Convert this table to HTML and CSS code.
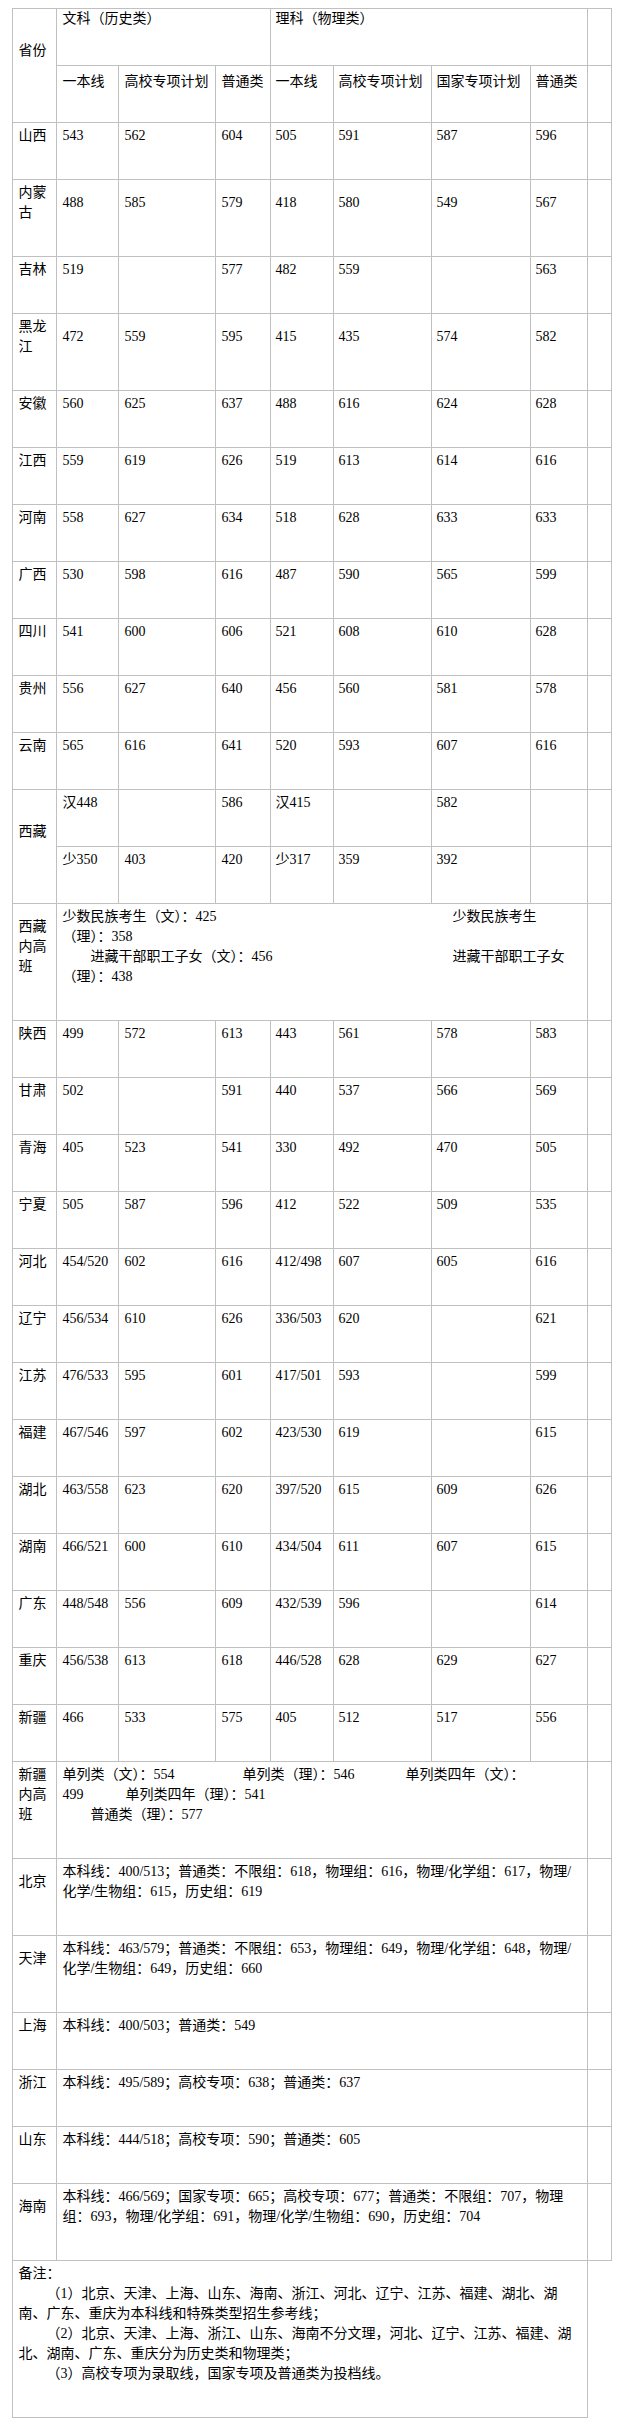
FILE: index.html
```html
<!DOCTYPE html>
<html lang="zh-CN">
<head>
<meta charset="utf-8">
<title>各省录取分数线</title>
<link rel="stylesheet" href="styles.css">
</head>
<body>
<table class="score">
<colgroup>
<col class="w-prov"><col class="w-a1"><col class="w-a2"><col class="w-a3"><col class="w-b1"><col class="w-b2"><col class="w-b3"><col class="w-b4"><col class="w-end">
</colgroup>
<tbody>
<tr>
<td rowspan="2">省份</td>
<td colspan="3" class="top">文科（历史类）</td>
<td colspan="4" class="top">理科（物理类）</td>
<td class="top"></td>
</tr>
<tr class="hd2">
<td>一本线</td><td>高校专项计划</td><td>普通类</td><td>一本线</td><td>高校专项计划</td><td>国家专项计划</td><td>普通类</td><td></td>
</tr>
<tr><td>山西</td><td>543</td><td>562</td><td>604</td><td>505</td><td>591</td><td>587</td><td>596</td><td></td></tr>
<tr><td>内蒙古</td><td>488</td><td>585</td><td>579</td><td>418</td><td>580</td><td>549</td><td>567</td><td></td></tr>
<tr><td>吉林</td><td>519</td><td></td><td>577</td><td>482</td><td>559</td><td></td><td>563</td><td></td></tr>
<tr><td>黑龙江</td><td>472</td><td>559</td><td>595</td><td>415</td><td>435</td><td>574</td><td>582</td><td></td></tr>
<tr><td>安徽</td><td>560</td><td>625</td><td>637</td><td>488</td><td>616</td><td>624</td><td>628</td><td></td></tr>
<tr><td>江西</td><td>559</td><td>619</td><td>626</td><td>519</td><td>613</td><td>614</td><td>616</td><td></td></tr>
<tr><td>河南</td><td>558</td><td>627</td><td>634</td><td>518</td><td>628</td><td>633</td><td>633</td><td></td></tr>
<tr><td>广西</td><td>530</td><td>598</td><td>616</td><td>487</td><td>590</td><td>565</td><td>599</td><td></td></tr>
<tr><td>四川</td><td>541</td><td>600</td><td>606</td><td>521</td><td>608</td><td>610</td><td>628</td><td></td></tr>
<tr><td>贵州</td><td>556</td><td>627</td><td>640</td><td>456</td><td>560</td><td>581</td><td>578</td><td></td></tr>
<tr><td>云南</td><td>565</td><td>616</td><td>641</td><td>520</td><td>593</td><td>607</td><td>616</td><td></td></tr>
<tr><td rowspan="2">西藏</td><td>汉448</td><td></td><td>586</td><td>汉415</td><td></td><td>582</td><td></td><td></td></tr>
<tr><td>少350</td><td>403</td><td>420</td><td>少317</td><td>359</td><td>392</td><td></td><td></td></tr>
<tr>
<td>西藏内高班</td>
<td colspan="7"><span class="za">少数民族考生（文）：425</span>少数民族考生<br>（理）：358<br><span class="za"><span class="ind">进藏干部职工子女（文）：456</span></span>进藏干部职工子女<br>（理）：438</td>
<td></td>
</tr>
<tr><td>陕西</td><td>499</td><td>572</td><td>613</td><td>443</td><td>561</td><td>578</td><td>583</td><td></td></tr>
<tr><td>甘肃</td><td>502</td><td></td><td>591</td><td>440</td><td>537</td><td>566</td><td>569</td><td></td></tr>
<tr><td>青海</td><td>405</td><td>523</td><td>541</td><td>330</td><td>492</td><td>470</td><td>505</td><td></td></tr>
<tr><td>宁夏</td><td>505</td><td>587</td><td>596</td><td>412</td><td>522</td><td>509</td><td>535</td><td></td></tr>
<tr><td>河北</td><td>454/520</td><td>602</td><td>616</td><td>412/498</td><td>607</td><td>605</td><td>616</td><td></td></tr>
<tr><td>辽宁</td><td>456/534</td><td>610</td><td>626</td><td>336/503</td><td>620</td><td></td><td>621</td><td></td></tr>
<tr><td>江苏</td><td>476/533</td><td>595</td><td>601</td><td>417/501</td><td>593</td><td></td><td>599</td><td></td></tr>
<tr><td>福建</td><td>467/546</td><td>597</td><td>602</td><td>423/530</td><td>619</td><td></td><td>615</td><td></td></tr>
<tr><td>湖北</td><td>463/558</td><td>623</td><td>620</td><td>397/520</td><td>615</td><td>609</td><td>626</td><td></td></tr>
<tr><td>湖南</td><td>466/521</td><td>600</td><td>610</td><td>434/504</td><td>611</td><td>607</td><td>615</td><td></td></tr>
<tr><td>广东</td><td>448/548</td><td>556</td><td>609</td><td>432/539</td><td>596</td><td></td><td>614</td><td></td></tr>
<tr><td>重庆</td><td>456/538</td><td>613</td><td>618</td><td>446/528</td><td>628</td><td>629</td><td>627</td><td></td></tr>
<tr><td>新疆</td><td>466</td><td>533</td><td>575</td><td>405</td><td>512</td><td>517</td><td>556</td><td></td></tr>
<tr>
<td>新疆内高班</td>
<td colspan="7"><span class="xa">单列类（文）：554</span><span class="xb">单列类（理）：546</span>单列类四年（文）：<br><span class="xc">499</span>单列类四年（理）：541<br><span class="ind">普通类（理）：577</span></td>
<td></td>
</tr>
<tr><td>北京</td><td colspan="7">本科线：400/513；普通类：不限组：618，物理组：616，物理/化学组：617，物理/<br>化学/生物组：615，历史组：619</td><td></td></tr>
<tr><td>天津</td><td colspan="7">本科线：463/579；普通类：不限组：653，物理组：649，物理/化学组：648，物理/<br>化学/生物组：649，历史组：660</td><td></td></tr>
<tr><td>上海</td><td colspan="7">本科线：400/503；普通类：549</td><td></td></tr>
<tr><td>浙江</td><td colspan="7">本科线：495/589；高校专项：638；普通类：637</td><td></td></tr>
<tr><td>山东</td><td colspan="7">本科线：444/518；高校专项：590；普通类：605</td><td></td></tr>
<tr><td>海南</td><td colspan="7">本科线：466/569；国家专项：665；高校专项：677；普通类：不限组：707，物理<br>组：693，物理/化学组：691，物理/化学/生物组：690，历史组：704</td><td></td></tr>
<tr>
<td colspan="8" class="note">
<p>备注：</p>
<p class="para">（1）北京、天津、上海、山东、海南、浙江、河北、辽宁、江苏、福建、湖北、湖<br>南、广东、重庆为本科线和特殊类型招生参考线；</p>
<p class="para">（2）北京、天津、上海、浙江、山东、海南不分文理，河北、辽宁、江苏、福建、湖<br>北、湖南、广东、重庆分为历史类和物理类；</p>
<p class="para">（3）高校专项为录取线，国家专项及普通类为投档线。</p>
</td>
</tr>
</tbody>
</table>
</body>
</html>
```

FILE: styles.css
```css
html, body {
  background: #ffffff;
}

body {
  margin: 8px;
  color: #000000;
  font-family: "Liberation Serif", "Noto Sans CJK SC", serif;
  font-size: 14px;
  line-height: 20px;
}

.score {
  width: 599px;
  margin: 0 auto;
  border-collapse: collapse;
  table-layout: fixed;
}

.w-prov { width: 44px; }
.w-a1 { width: 62px; }
.w-a2 { width: 97px; }
.w-a3 { width: 54px; }
.w-b1 { width: 63px; }
.w-b2 { width: 98px; }
.w-b3 { width: 99px; }
.w-b4 { width: 57px; }
.w-end { width: 24px; }

.score td {
  border: 1px solid #c0c0c0;
  padding: 3px 5px 33px;
  vertical-align: middle;
  text-align: left;
  line-height: 20px;
}

.score td.top {
  padding: 0 5px 36px;
}

.hd2 td {
  padding: 6px 5px 30px;
  white-space: nowrap;
}

.za {
  display: inline-block;
  width: 390px;
}

.xa {
  display: inline-block;
  width: 180px;
}

.xb {
  display: inline-block;
  width: 163px;
}

.xc {
  display: inline-block;
  width: 63px;
}

.ind {
  padding-left: 28px;
}

.note p {
  margin: 0;
}

.note .para {
  text-indent: 28px;
}
```
